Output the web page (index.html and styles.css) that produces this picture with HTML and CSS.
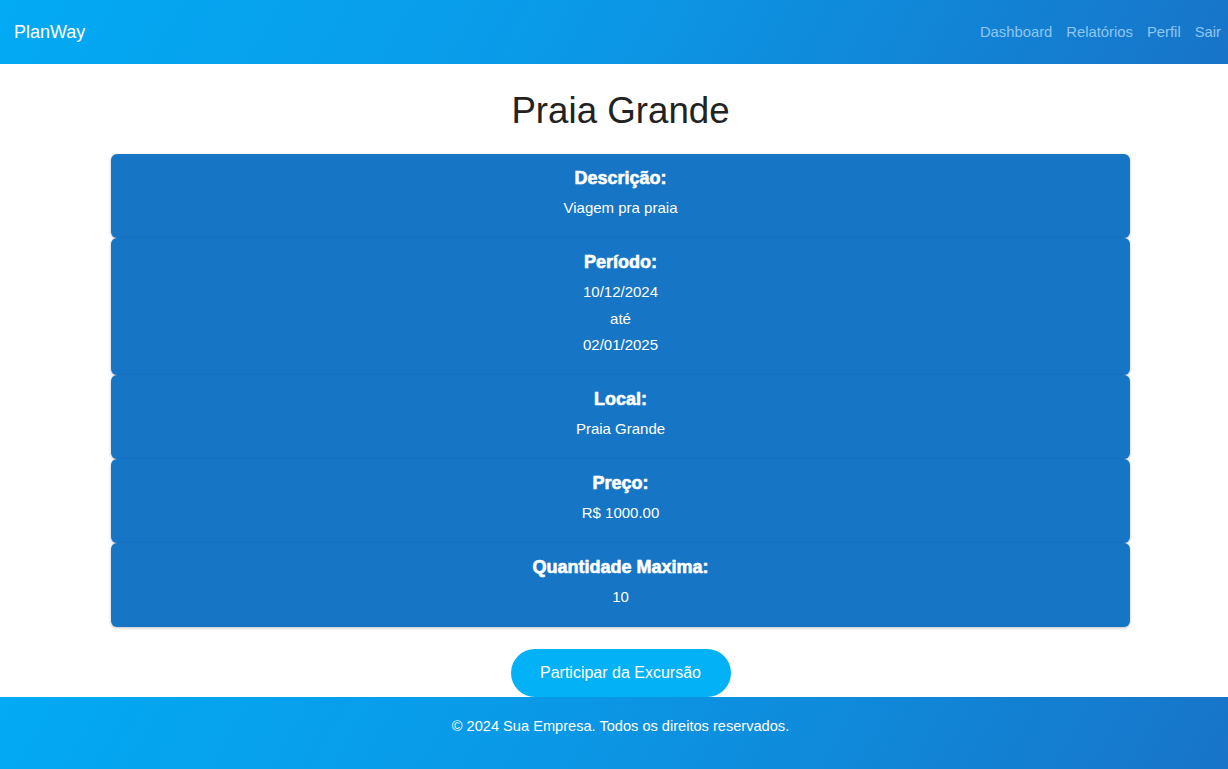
FILE: index.html
```html
<!DOCTYPE html>
<html lang="pt-BR">
<head>
<meta charset="utf-8">
<title>PlanWay - Praia Grande</title>
<link rel="stylesheet" href="styles.css">
</head>
<body>
<header class="topbar">
  <div class="brand">PlanWay</div>
  <nav class="nav">
    <a href="#">Dashboard</a>
    <a href="#">Relatórios</a>
    <a href="#">Perfil</a>
    <a href="#">Sair</a>
  </nav>
</header>
<main class="main">
  <h1 class="title">Praia Grande</h1>
  <section class="cards">
    <div class="card">
      <div class="label">Descrição:</div>
      <div class="value">Viagem pra praia</div>
    </div>
    <div class="card">
      <div class="label">Período:</div>
      <div class="value">10/12/2024<br>até<br>02/01/2025</div>
    </div>
    <div class="card">
      <div class="label">Local:</div>
      <div class="value">Praia Grande</div>
    </div>
    <div class="card">
      <div class="label">Preço:</div>
      <div class="value">R$ 1000.00</div>
    </div>
    <div class="card">
      <div class="label">Quantidade Maxima:</div>
      <div class="value">10</div>
    </div>
  </section>
  <div class="actions">
    <button class="btn">Participar da Excursão</button>
  </div>
</main>
<footer class="footer">
  <p class="footer-text">© 2024 Sua Empresa. Todos os direitos reservados.</p>
</footer>
</body>
</html>
```
FILE: styles.css
```css
html, body {
  margin: 0;
  padding: 0;
}
body {
  font-family: "Liberation Sans", Arial, sans-serif;
  color: #222;
  background: #fff;
  overflow-x: hidden;
}
.topbar {
  height: 64px;
  display: flex;
  align-items: center;
  justify-content: space-between;
  padding: 0 7px 0 14px;
  background: linear-gradient(120deg, #03aaf4 0%, #0a9ae8 45%, #1874c8 100%);
}
.brand {
  color: #fff;
  font-size: 18px;
}
.nav {
  display: flex;
  gap: 14px;
}
.nav a {
  color: #8fc6f2;
  text-decoration: none;
  font-size: 14.8px;
}
.main {
  padding-left: 13px;
  display: flex;
  flex-direction: column;
  align-items: center;
}
.title {
  font-size: 36.7px;
  font-weight: normal;
  line-height: 41px;
  margin: 26px 0 23px 0;
  color: #222;
}
.cards {
  width: 1019px;
  display: flex;
  flex-direction: column;
}
.card {
  background: #1775c6;
  border-radius: 6px;
  box-shadow: 0 1px 3px rgba(0, 0, 0, 0.25);
  color: #fff;
  text-align: center;
  padding: 14px 20px 16.5px;
}
.label {
  font-size: 18px;
  font-weight: bold;
  line-height: 20px;
  -webkit-text-stroke: 0.6px #fff;
}
.value {
  margin-top: 7px;
  font-size: 15px;
  line-height: 26.5px;
}
.actions {
  margin-top: 22px;
}
.btn {
  width: 220px;
  height: 48px;
  border: none;
  border-radius: 24px;
  background: #03b1f6;
  color: #fff;
  font-family: "Liberation Sans", Arial, sans-serif;
  font-size: 16px;
  cursor: pointer;
  display: block;
}
.footer {
  height: 72px;
  box-sizing: border-box;
  padding: 21px 0 0 13px;
  background: linear-gradient(120deg, #03aaf4 0%, #0a98e6 45%, #1874c8 100%);
  display: flex;
  justify-content: center;
  align-items: flex-start;
}
.footer-text {
  margin: 0;
  color: #fff;
  font-size: 14.6px;
  line-height: 17px;
}
```
